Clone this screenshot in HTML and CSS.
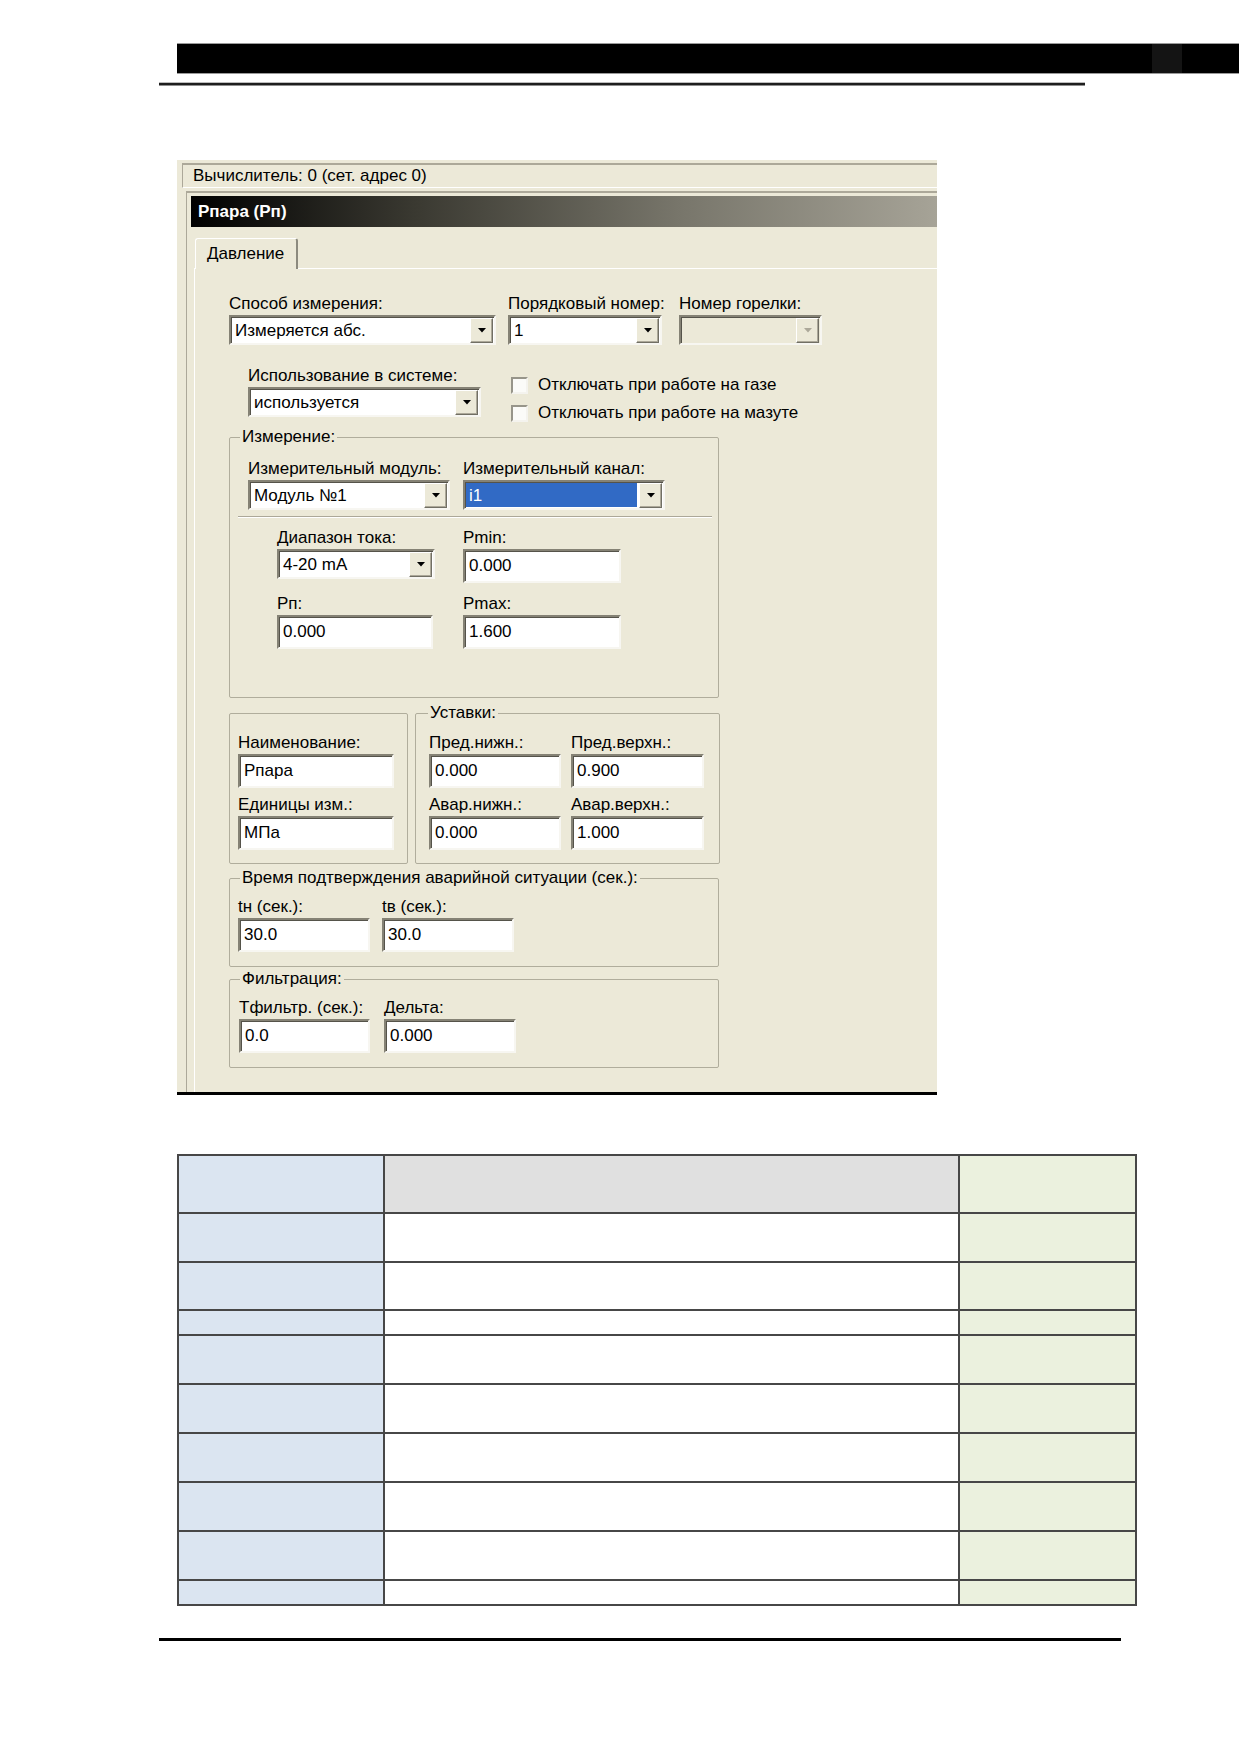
FILE: index.html
```html
<!DOCTYPE html>
<html lang="ru">
<head>
    <meta charset="UTF-8">
    <title>Рпара (Рп)</title>
    <link rel="stylesheet" href="styles.css">
</head>
<body>
    <div class="sheet-head"><span class="sheet-head-mark"></span></div>
    <div class="sheet-rule"></div>

    <div class="dialog">
        <div class="status">Вычислитель: 0 (сет. адрес 0)</div>
        <div class="frame">
            <div class="caption">Рпара (Рп)</div>
            <div class="tabs">
                <span class="tabs-gap"></span>
                <div class="tab">Давление</div>
                <span class="tabs-fill"></span>
            </div>

            <div class="tab-page">
                <!-- способ измерения / номера -->
                <div class="row">
                    <div class="field f-method">
                        <span class="lbl">Способ измерения:</span>
                        <div class="combo"><span class="combo-text">Измеряется абс.</span><span class="combo-btn"><svg width="8" height="5" viewBox="0 0 8 5"><path d="M0 0H8L4 4.5Z"/></svg></span></div>
                    </div>
                    <div class="field f-order">
                        <span class="lbl">Порядковый номер:</span>
                        <div class="combo"><span class="combo-text">1</span><span class="combo-btn"><svg width="8" height="5" viewBox="0 0 8 5"><path d="M0 0H8L4 4.5Z"/></svg></span></div>
                    </div>
                    <div class="field f-burner">
                        <span class="lbl">Номер горелки:</span>
                        <div class="combo disabled"><span class="combo-text"></span><span class="combo-btn"><svg width="8" height="5" viewBox="0 0 8 5"><path d="M0 0H8L4 4.5Z"/></svg></span></div>
                    </div>
                </div>

                <div class="row row-usage">
                    <div class="field f-usage">
                        <span class="lbl">Использование в системе:</span>
                        <div class="combo"><span class="combo-text">используется</span><span class="combo-btn"><svg width="8" height="5" viewBox="0 0 8 5"><path d="M0 0H8L4 4.5Z"/></svg></span></div>
                    </div>
                    <div class="checks">
                        <label class="check"><span class="check-box"></span>Отключать при работе на газе</label>
                        <label class="check"><span class="check-box"></span>Отключать при работе на мазуте</label>
                    </div>
                </div>

                <!-- измерение -->
                <fieldset class="group g-measure">
                    <legend>Измерение:</legend>
                    <div class="row">
                        <div class="field f-module">
                            <span class="lbl">Измерительный модуль:</span>
                            <div class="combo"><span class="combo-text">Модуль №1</span><span class="combo-btn"><svg width="8" height="5" viewBox="0 0 8 5"><path d="M0 0H8L4 4.5Z"/></svg></span></div>
                        </div>
                        <div class="field f-channel">
                            <span class="lbl">Измерительный канал:</span>
                            <div class="combo"><span class="combo-text selected">i1</span><span class="combo-btn"><svg width="8" height="5" viewBox="0 0 8 5"><path d="M0 0H8L4 4.5Z"/></svg></span></div>
                        </div>
                    </div>
                    <div class="separator"></div>
                    <div class="row row-range">
                        <div class="field f-range">
                            <span class="lbl">Диапазон тока:</span>
                            <div class="combo"><span class="combo-text">4-20 mA</span><span class="combo-btn"><svg width="8" height="5" viewBox="0 0 8 5"><path d="M0 0H8L4 4.5Z"/></svg></span></div>
                        </div>
                        <div class="field f-pmin">
                            <span class="lbl">Pmin:</span>
                            <div class="edit">0.000</div>
                        </div>
                    </div>
                    <div class="row row-pn">
                        <div class="field f-pn">
                            <span class="lbl">Рп:</span>
                            <div class="edit">0.000</div>
                        </div>
                        <div class="field f-pmax">
                            <span class="lbl">Pmax:</span>
                            <div class="edit">1.600</div>
                        </div>
                    </div>
                </fieldset>

                <!-- наименование и уставки -->
                <div class="row row-split">
                    <fieldset class="group g-name">
                        <div class="field">
                            <span class="lbl">Наименование:</span>
                            <div class="edit">Рпара</div>
                        </div>
                        <div class="field next">
                            <span class="lbl">Единицы изм.:</span>
                            <div class="edit">МПа</div>
                        </div>
                    </fieldset>
                    <fieldset class="group g-limits">
                        <legend>Уставки:</legend>
                        <div class="limits">
                            <div class="field">
                                <span class="lbl">Пред.нижн.:</span>
                                <div class="edit">0.000</div>
                            </div>
                            <div class="field">
                                <span class="lbl">Пред.верхн.:</span>
                                <div class="edit">0.900</div>
                            </div>
                            <div class="field">
                                <span class="lbl">Авар.нижн.:</span>
                                <div class="edit">0.000</div>
                            </div>
                            <div class="field">
                                <span class="lbl">Авар.верхн.:</span>
                                <div class="edit">1.000</div>
                            </div>
                        </div>
                    </fieldset>
                </div>

                <fieldset class="group g-time">
                    <legend>Время подтверждения аварийной ситуации (сек.):</legend>
                    <div class="row">
                        <div class="field f-small">
                            <span class="lbl">tн (сек.):</span>
                            <div class="edit">30.0</div>
                        </div>
                        <div class="field f-small f-second">
                            <span class="lbl">tв (сек.):</span>
                            <div class="edit">30.0</div>
                        </div>
                    </div>
                </fieldset>

                <fieldset class="group g-filter">
                    <legend>Фильтрация:</legend>
                    <div class="row">
                        <div class="field f-small f-tfilter">
                            <span class="lbl">Тфильтр. (сек.):</span>
                            <div class="edit">0.0</div>
                        </div>
                        <div class="field f-small f-delta">
                            <span class="lbl">Дельта:</span>
                            <div class="edit">0.000</div>
                        </div>
                    </div>
                </fieldset>
            </div>
        </div>
    </div>

    <table class="grid">
        <tr class="r-head"><td class="c-key"></td><td class="c-desc"></td><td class="c-val"></td></tr>
        <tr class="r-tall"><td class="c-key"></td><td></td><td class="c-val"></td></tr>
        <tr class="r-mid"><td class="c-key"></td><td></td><td class="c-val"></td></tr>
        <tr class="r-short"><td class="c-key"></td><td></td><td class="c-val"></td></tr>
        <tr class="r-tall"><td class="c-key"></td><td></td><td class="c-val"></td></tr>
        <tr class="r-tall"><td class="c-key"></td><td></td><td class="c-val"></td></tr>
        <tr class="r-tall"><td class="c-key"></td><td></td><td class="c-val"></td></tr>
        <tr class="r-tall"><td class="c-key"></td><td></td><td class="c-val"></td></tr>
        <tr class="r-tall"><td class="c-key"></td><td></td><td class="c-val"></td></tr>
        <tr class="r-short"><td class="c-key"></td><td></td><td class="c-val"></td></tr>
    </table>

    <div class="page-rule"></div>
</body>
</html>
```

FILE: styles.css
```css
* {
    box-sizing: border-box;
}
body {
    margin: 0;
    background: #fff;
    font-family: "Liberation Sans", Arial, sans-serif;
    font-size: 17px;
    color: #000;
}

/* шапка страницы */
.sheet-head {
    display: flex;
    height: 29px;
    margin: 44px 0 0 177px;
    background: #000;
    box-shadow: 0 -1px 0 #9a9a9a, 0 1px 0 #9a9a9a;
}
.sheet-head-mark {
    width: 30px;
    margin-left: 975px;
    background: #141414;
}
.sheet-rule {
    width: 926px;
    height: 2px;
    margin: 10px 0 0 159px;
    background: #1e1e1e;
    box-shadow: 0 1px 0 #8d8d8d, 0 -1px 0 #bdbdbd;
}

/* окно настроек */
.dialog {
    width: 760px;
    margin: 75px 0 0 177px;
    padding-top: 3px;
    background: #ece9d8;
    border-bottom: 3px solid #000;
}
.status {
    height: 25px;
    margin-left: 5px;
    padding-left: 10px;
    line-height: 22px;
    border-top: 2px solid #aca899;
    border-left: 1px solid #aca899;
    border-bottom: 1px solid #fff;
    white-space: nowrap;
}
.frame {
    margin: 3px 0 0 9px;
    padding: 3px 0 0 4px;
    border-top: 2px solid #aca899;
    border-left: 1px solid #aca899;
}
.caption {
    height: 31px;
    padding-left: 7px;
    line-height: 31px;
    font-weight: bold;
    color: #fff;
    background: linear-gradient(to right, #000 0%, #3a3931 30%, #77756a 65%, #a6a397 100%);
}
.tabs {
    display: flex;
    align-items: flex-end;
    height: 42px;
    margin-left: 3px;
}
.tabs-gap {
    width: 1px;
    border-bottom: 1px solid #fff;
}
.tab {
    width: 103px;
    height: 31px;
    padding-left: 11px;
    line-height: 30px;
    border-top: 1px solid #fff;
    border-left: 1px solid #fff;
    border-right: 2px solid #8c8a7e;
    border-radius: 3px 3px 0 0;
}
.tabs-fill {
    flex: 1;
    border-bottom: 1px solid #fff;
}
.tab-page {
    margin-left: 3px;
    padding: 24px 0 24px 34px;
    border-left: 1px solid #fff;
}

/* поля */
.row {
    display: flex;
    align-items: flex-start;
}
.field {
    display: flex;
    flex-direction: column;
}
.lbl {
    height: 22px;
    line-height: 22px;
    white-space: nowrap;
}
.combo {
    display: flex;
    height: 30px;
    background: #fff;
    border: 2px solid;
    border-color: #858275 #f7f6f1 #f7f6f1 #858275;
    box-shadow: inset 1px 1px 0 #55534a;
}
.combo-text {
    flex: 1;
    margin: 1px 2px 1px 1px;
    padding-left: 3px;
    line-height: 25px;
    white-space: nowrap;
}
.combo-text.selected {
    background: #316ac5;
    color: #fff;
}
.combo-btn {
    display: flex;
    align-items: center;
    justify-content: center;
    width: 23px;
    margin: 1px 1px 0 0;
    background: #ece9d8;
    border: 1px solid;
    border-color: #fff #716f64 #716f64 #fff;
    box-shadow: inset -1px -1px 0 #aca899;
}
.combo.disabled {
    background: #ece9d8;
}
.combo.disabled .combo-btn path {
    fill: #aca899;
}
.edit {
    height: 34px;
    padding-left: 4px;
    line-height: 30px;
    background: #fff;
    border: 2px solid;
    border-color: #858275 #f7f6f1 #f7f6f1 #858275;
    box-shadow: inset 1px 1px 0 #55534a;
    white-space: nowrap;
}

.f-method { width: 267px; }
.f-order { width: 154px; margin-left: 12px; }
.f-burner { width: 143px; margin-left: 17px; }

.row-usage { margin-top: 20px; }
.f-usage { width: 233px; margin-left: 19px; }
.checks {
    margin: 6px 0 0 30px;
}
.check {
    display: flex;
    align-items: center;
    height: 28px;
    white-space: nowrap;
}
.check-box {
    width: 17px;
    height: 17px;
    margin-right: 10px;
    background: #fbfbf8;
    border: 2px solid;
    border-color: #97958a #f4f3ee #f4f3ee #97958a;
}

/* рамки групп */
.group {
    margin: 0;
    min-inline-size: 0;
    border: 1px solid #b0ad9c;
    border-radius: 2px;
}
.group legend {
    padding: 0 2px;
    line-height: 20px;
    white-space: nowrap;
}
.g-measure {
    width: 490px;
    padding: 11px 6px 48px 10px;
}
.f-module { width: 202px; margin-left: 8px; }
.f-channel { width: 202px; margin-left: 13px; }
.separator {
    margin: 6px 0 0 -2px;
    border-top: 1px solid #aca899;
    border-bottom: 1px solid #fff;
}
.row-range { margin-top: 9px; }
.f-range { width: 158px; margin-left: 37px; }
.f-pmin { width: 158px; margin-left: 28px; }
.row-pn { margin-top: 10px; }
.f-pn { width: 156px; margin-left: 37px; }
.f-pmax { width: 158px; margin-left: 30px; }

.row-split { margin-top: 5px; }
.g-name {
    width: 179px;
    margin-top: 10px;
    padding: 18px 13px 13px 8px;
}
.g-name .field { width: 156px; }
.field.next { margin-top: 6px; }
.g-limits {
    width: 305px;
    margin-left: 7px;
    padding: 9px 8px 13px 13px;
}
.g-limits legend { margin-left: -1px; }
.limits {
    display: grid;
    grid-template-columns: 132px 133px;
    column-gap: 10px;
    row-gap: 6px;
}

.g-time {
    width: 490px;
    margin-top: 4px;
    padding: 8px 0 14px 8px;
}
.g-time legend { margin-left: 2px; }
.f-small { width: 132px; }
.f-second { margin-left: 12px; }
.g-filter {
    width: 490px;
    margin-top: 2px;
    padding: 8px 0 14px 9px;
}
.g-filter legend { margin-left: 1px; }
.f-tfilter { width: 131px; }
.f-delta { margin-left: 14px; }

/* таблица параметров */
.grid {
    width: 960px;
    margin: 59px 0 0 177px;
    border-collapse: collapse;
}
.grid td {
    padding: 0;
    border: 2px solid #474747;
}
.grid .c-key {
    width: 206px;
    background: #dbe5f1;
}
.grid .c-val {
    width: 177px;
    background: #ebf1de;
}
.grid .c-desc {
    background: #e0e0e0;
}
.r-head { height: 58px; }
.r-tall { height: 49px; }
.r-mid { height: 48px; }
.r-short { height: 25px; }

.page-rule {
    width: 962px;
    height: 3px;
    margin: 32px 0 0 159px;
    background: #000;
}
```
